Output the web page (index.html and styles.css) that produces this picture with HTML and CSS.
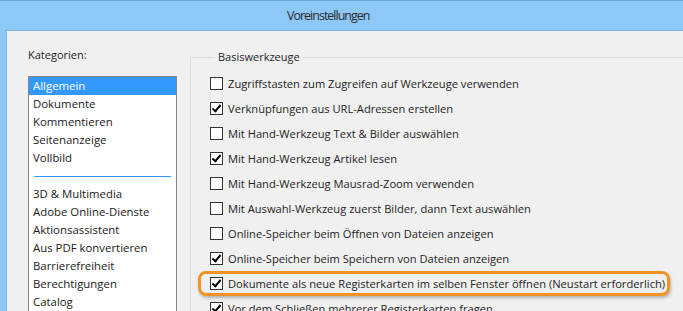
FILE: index.html
```html
<html>
<head>
<meta charset="utf-8">
<title>Voreinstellungen</title>
<link rel="stylesheet" href="styles.css">
</head>
<body>
<div class="win">
    <div class="titlebar"><span class="title">Voreinstellungen</span></div>
    <div class="frame">
        <div class="client">
            <div class="cats">
                <div class="cats-label">Kategorien:</div>
                <ul class="list">
                    <li class="on">Allgemein</li>
                    <li>Dokumente</li>
                    <li>Kommentieren</li>
                    <li>Seitenanzeige</li>
                    <li>Vollbild</li>
                    <li class="sep"></li>
                    <li>3D &amp; Multimedia</li>
                    <li>Adobe Online-Dienste</li>
                    <li>Aktionsassistent</li>
                    <li>Aus PDF konvertieren</li>
                    <li>Barrierefreiheit</li>
                    <li>Berechtigungen</li>
                    <li>Catalog</li>
                </ul>
            </div>
            <fieldset class="group">
                <legend>Basiswerkzeuge</legend>
                <label class="row"><span class="box"></span>Zugriffstasten zum Zugreifen auf Werkzeuge verwenden</label>
                <label class="row"><span class="box checked"></span>Verknüpfungen aus URL-Adressen erstellen</label>
                <label class="row"><span class="box"></span>Mit Hand-Werkzeug Text &amp; Bilder auswählen</label>
                <label class="row"><span class="box checked"></span>Mit Hand-Werkzeug Artikel lesen</label>
                <label class="row"><span class="box"></span>Mit Hand-Werkzeug Mausrad-Zoom verwenden</label>
                <label class="row"><span class="box"></span>Mit Auswahl-Werkzeug zuerst Bilder, dann Text auswählen</label>
                <label class="row"><span class="box"></span>Online-Speicher beim Öffnen von Dateien anzeigen</label>
                <label class="row"><span class="box checked"></span>Online-Speicher beim Speichern von Dateien anzeigen</label>
                <label class="row mark"><span class="box checked"></span>Dokumente als neue Registerkarten im selben Fenster öffnen (Neustart erforderlich)</label>
                <label class="row"><span class="box checked"></span>Vor dem Schließen mehrerer Registerkarten fragen</label>
            </fieldset>
        </div>
    </div>
</div>
</body>
</html>
```

FILE: styles.css
```css
body,div,ul,li,fieldset,legend{margin:0;padding:0;}
body{width:683px;height:311px;overflow:hidden;background:#8dc8f9;color:#1e1e1e;font:11px/16px "Open Sans","Noto Sans",sans-serif;}
ul{list-style-type:none;}

.win{display:flex;flex-direction:column;height:311px;}
.titlebar{height:29px;border-top:1px solid #6fa5d6;background:#8dc8f9;flex:none;}
.title{display:block;padding:6px 0 0 287px;font-size:12.5px;line-height:18px;letter-spacing:-1px;color:#2b2b2b;}

.frame{flex:1;display:flex;padding-left:6px;min-height:0;}
.client{flex:1;display:flex;align-items:flex-start;background:#f0f0f0;border-top:1px solid #7fb3e0;border-left:1px solid #7fb3e0;padding:16px 0 0 21px;}

.cats{width:149px;flex:none;}
.cats-label{height:16px;margin-bottom:13px;}
.list{border:1px solid #828790;border-bottom:none;background:#fff;height:240px;}
.list li{height:18px;line-height:18px;padding-left:4px;color:#1a1a1a;font-size:11.4px;}
.list li.on{background:#3399ff;color:#fff;}
.list li.sep{position:relative;}
.list li.sep:before{content:"";position:absolute;left:5px;right:5px;top:9px;border-top:1px solid #3399ff;}

.group{margin:2px 0 0 13px;flex:1;border:1px solid #dcdcdc;border-right:none;border-bottom:none;padding:6px 0 0 19px;min-width:0;}
.group legend{margin-left:5px;padding:0 3px;line-height:16px;}

.row{position:relative;display:flex;align-items:center;height:25px;white-space:nowrap;font-size:11.15px;}
.box{width:11px;height:11px;border:1px solid #333;background:#fff;margin-right:5px;flex:none;position:relative;}
.box.checked:after{content:"";position:absolute;left:3px;top:0px;width:3px;height:7px;border:solid #000;border-width:0 2px 2px 0;transform:rotate(40deg);}
.row.mark:before{content:"";position:absolute;left:-12px;width:466px;top:0;height:19px;border:3px solid #f39325;border-radius:8px;box-shadow:1px 2px 3px rgba(0,0,0,.25);}
```
